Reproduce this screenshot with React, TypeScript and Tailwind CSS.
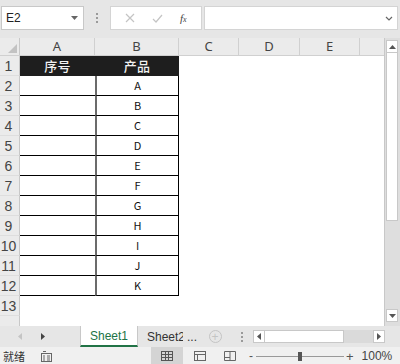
import React from "react";

const cols = [
  { key: "A", w: 75, label: "A" },
  { key: "B", w: 84, label: "B" },
  { key: "C", w: 60, label: "C" },
  { key: "D", w: 61, label: "D" },
  { key: "E", w: 60, label: "E" },
  { key: "F", w: 30, label: "" },
];

const products = ["A", "B", "C", "D", "E", "F", "G", "H", "I", "J", "K"];
const rows = Array.from({ length: 14 }, (_, i) => i + 1);

function DotsV() {
  return (
    <div className="flex flex-col gap-[2px] items-center">
      <span className="w-[2px] h-[2px] bg-[#9a9a9a]" />
      <span className="w-[2px] h-[2px] bg-[#9a9a9a]" />
      <span className="w-[2px] h-[2px] bg-[#9a9a9a]" />
    </div>
  );
}

function Cell({ row, col }: { row: number; col: string }) {
  // table body: rows 1..12, cols A and B
  if (row === 1 && (col === "A" || col === "B")) {
    return (
      <div className="h-full flex items-center justify-center bg-[#1e1e1e] text-[#f2f2f2] text-[13px] font-medium tracking-wide [font-family:'Noto_Sans_CJK_SC',sans-serif]">
        {col === "A" ? "序号" : "产品"}
      </div>
    );
  }
  if (row >= 2 && row <= 12 && col === "A") {
    return <div className="h-full border-b border-black" />;
  }
  if (row >= 2 && row <= 12 && col === "B") {
    return (
      <div className="h-full border-b border-black border-l-2 border-l-[#6b6b6b] border-r border-r-black flex items-center justify-center text-[11px] text-[#111] [font-family:'Noto_Sans_CJK_SC',sans-serif]">
        {products[row - 2]}
      </div>
    );
  }
  return <div className="h-full" />;
}

export default function App() {
  return (
    <div className="w-[400px] h-[364px] overflow-hidden bg-[#e6e6e6] flex flex-col [font-family:'Liberation_Sans',sans-serif] select-none">
      {/* formula bar */}
      <div className="h-[38px] shrink-0 flex items-start pt-[6px] pl-[1px] pr-[2px]">
        <div className="w-[83px] h-[24px] bg-white border border-[#c8c8c8] flex items-center justify-between pl-[4px] pr-[5px]">
          <span className="text-[12px] text-[#222]">E2</span>
          <svg width="7" height="4" viewBox="0 0 7 4"><path d="M0 0h7L3.5 4z" fill="#666" /></svg>
        </div>
        <div className="w-[26px] h-[24px] flex items-center justify-center">
          <DotsV />
        </div>
        <div className="w-[92px] h-[24px] bg-white border border-[#d4d4d4] flex items-center justify-around px-[6px]">
          <svg width="10" height="10" viewBox="0 0 10 10"><path d="M1 1l8 8M9 1L1 9" stroke="#c4c4c4" strokeWidth="1.2" /></svg>
          <svg width="11" height="9" viewBox="0 0 11 9"><path d="M1 5l3 3 6-7" stroke="#c4c4c4" strokeWidth="1.2" fill="none" /></svg>
          <span className="text-[11px] italic text-[#444] [font-family:'Liberation_Serif',serif]">f<span className="text-[8px]">x</span></span>
        </div>
        <div className="flex-1 ml-[2px] h-[24px] bg-white border border-[#d4d4d4] flex items-center justify-end pr-[4px]">
          <svg width="8" height="5" viewBox="0 0 8 5"><path d="M1 1l3 3 3-3" stroke="#666" strokeWidth="1.2" fill="none" /></svg>
        </div>
      </div>

      {/* sheet area */}
      <div className="h-[288px] shrink-0 flex overflow-hidden">
        <div className="flex-1 flex flex-col overflow-hidden bg-white">
          {/* column headers */}
          <div className="h-[18px] shrink-0 flex bg-[#ebebeb] border-b border-[#d0d0d0]">
            <div className="w-[20px] shrink-0 border-r border-[#c8c8c8] relative">
              <svg className="absolute right-[2px] bottom-[2px]" width="9" height="9" viewBox="0 0 9 9"><path d="M9 0v9H0z" fill="#c2c2c2" /></svg>
            </div>
            {cols.map((c) => (
              <div
                key={c.key}
                style={{ width: c.w }}
                className="shrink-0 border-r border-[#d0d0d0] flex items-center justify-center text-[13px] text-[#444] [font-family:'Noto_Sans',sans-serif]"
              >
                {c.label}
              </div>
            ))}
          </div>
          {/* rows */}
          {rows.map((r) => (
            <div key={r} className="h-[20px] shrink-0 flex">
              <div className="w-[20px] shrink-0 bg-[#ebebeb] border-r border-[#c8c8c8] border-b border-b-[#dedede] flex items-center justify-center text-[14px] leading-none text-[#444] pr-[2px]">
                {r < 14 ? r : ""}
              </div>
              {cols.map((c) => (
                <div key={c.key} style={{ width: c.w }} className="shrink-0">
                  <Cell row={r} col={c.key} />
                </div>
              ))}
            </div>
          ))}
        </div>
        {/* vertical scrollbar */}
        <div className="w-[16px] shrink-0 flex flex-col bg-[#dedede] border-l border-[#c8c8c8] pl-[1px] pr-[2px] pt-[2px] pb-[4px]">
          <div className="h-[13px] bg-white border border-[#c8c8c8] flex items-center justify-center">
            <svg width="7" height="4" viewBox="0 0 7 4"><path d="M0 4h7L3.5 0z" fill="#555" /></svg>
          </div>
          <div className="h-[168px] bg-white border border-[#c8c8c8] border-t-0" />
          <div className="flex-1" />
          <div className="h-[13px] bg-white border border-[#c8c8c8] flex items-center justify-center">
            <svg width="7" height="4" viewBox="0 0 7 4"><path d="M0 0h7L3.5 4z" fill="#555" /></svg>
          </div>
        </div>
      </div>

      {/* sheet tabs */}
      <div className="h-[21px] shrink-0 flex items-stretch bg-[#e6e6e6]">
        <div className="w-[80px] shrink-0 flex items-center pl-[18px] gap-[19px]">
          <svg width="4" height="7" viewBox="0 0 4 7"><path d="M4 0v7L0 3.5z" fill="#c4c4c4" /></svg>
          <svg width="4" height="7" viewBox="0 0 4 7"><path d="M0 0v7l4-3.5z" fill="#444" /></svg>
        </div>
        <div className="w-[58px] shrink-0 bg-white border-b-2 border-[#217346] flex items-center justify-center text-[12px] text-[#217346] border-l border-l-[#c8c8c8] border-r border-r-[#c8c8c8]">
          Sheet1
        </div>
        <div className="w-[62px] shrink-0 flex items-center pl-[9px] text-[12px] text-[#333] whitespace-nowrap overflow-hidden">
          <span className="w-[36px] overflow-hidden">Sheet2</span>
          <span className="ml-[4px]">...</span>
        </div>
        <div className="w-[30px] shrink-0 flex items-center justify-center">
          <div className="w-[13px] h-[13px] rounded-full border border-[#c4c4c4] flex items-center justify-center text-[#c4c4c4] text-[12px] leading-none">+</div>
        </div>
        <div className="w-[23px] shrink-0 flex items-center justify-center">
          <DotsV />
        </div>
        <div className="w-[132px] shrink-0 flex items-center">
          <div className="h-[13px] w-full flex bg-[#dadada]">
            <div className="w-[12px] h-full bg-white border border-[#c8c8c8] flex items-center justify-center">
              <svg width="4" height="7" viewBox="0 0 4 7"><path d="M4 0v7L0 3.5z" fill="#555" /></svg>
            </div>
            <div className="w-[79px] h-full bg-white border border-[#c8c8c8] border-l-0" />
            <div className="flex-1" />
            <div className="w-[12px] h-full bg-white border border-[#c8c8c8] flex items-center justify-center">
              <svg width="4" height="7" viewBox="0 0 4 7"><path d="M0 0v7l4-3.5z" fill="#555" /></svg>
            </div>
          </div>
        </div>
      </div>

      {/* status bar */}
      <div className="flex-1 flex items-center bg-[#f0f0f0] text-[11px] text-[#333]">
        <span className="pl-[3px] [font-family:'Noto_Sans_CJK_SC',sans-serif]">就绪</span>
        <svg className="ml-[16px]" width="11" height="11" viewBox="0 0 11 11">
          <rect x="0.5" y="2.5" width="10" height="8" fill="none" stroke="#666" />
          <path d="M2 0.5h3M2 5h2M6 5h3M2 7h2M6 7h3M2 9h2M6 9h3" stroke="#666" />
        </svg>
        <div className="ml-[99px] w-[32px] h-full bg-[#d4d4d4] flex items-center justify-center">
          <svg width="12" height="10" viewBox="0 0 12 10">
            <rect x="0.5" y="0.5" width="11" height="9" fill="none" stroke="#555" />
            <path d="M4.5 0v10M7.5 0v10M0 3.5h12M0 6.5h12" stroke="#555" />
          </svg>
        </div>
        <div className="w-[34px] h-full flex items-center justify-center">
          <svg width="12" height="10" viewBox="0 0 12 10">
            <rect x="0.5" y="0.5" width="11" height="9" fill="none" stroke="#666" />
            <path d="M0 3.5h12M3.5 3.5v6" stroke="#666" />
          </svg>
        </div>
        <div className="w-[26px] h-full flex items-center justify-center">
          <svg width="12" height="10" viewBox="0 0 12 10">
            <path d="M0.5 0.5h11v9h-11zM6 0v10M0 6.5h6" stroke="#666" fill="none" />
          </svg>
        </div>
        <span className="ml-[6px] text-[12px] text-[#555]">-</span>
        <div className="w-[88px] h-[1px] bg-[#999] relative ml-[3px]">
          <div className="absolute left-[42px] top-[-4px] w-[4px] h-[9px] bg-[#555]" />
        </div>
        <span className="ml-[2px] text-[13px] text-[#555] leading-none">+</span>
        <span className="ml-[8px] text-[12px] text-[#444]">100%</span>
      </div>
    </div>
  );
}
